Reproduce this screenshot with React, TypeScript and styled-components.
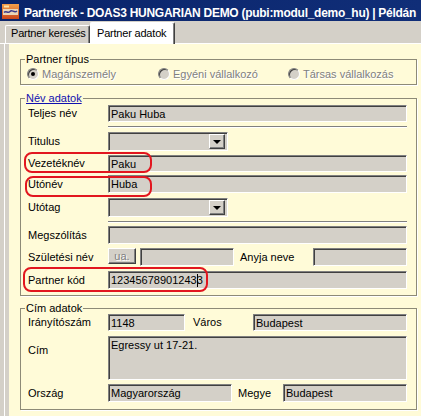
import React from "react";
import styled, { createGlobalStyle } from "styled-components";

const GlobalStyle = createGlobalStyle`
  html, body { margin: 0; padding: 0; background: #d4d0c8; }
  body {
    font-family: "Liberation Sans", Arial, sans-serif;
    font-size: 11px;
    color: #000;
  }
  * { box-sizing: border-box; }
`;

const Window = styled.div`
  width: 421px;
  height: 416px;
  overflow: hidden;
  display: flex;
  flex-direction: column;
  background: #d4d0c8;
`;

const TitleBar = styled.div`
  height: 21px;
  flex: none;
  display: flex;
  align-items: flex-start;
  gap: 5px;
  padding: 4px 0 0 2px;
  background: linear-gradient(90deg, #0a246a 0%, #102e78 100%);
  overflow: hidden;
`;

const Title = styled.div`
  margin-top: 2px;
  color: #fff;
  font-weight: bold;
  font-size: 12px;
  line-height: 14px;
  letter-spacing: -0.28px;
  white-space: nowrap;
`;

const TabStrip = styled.div`
  height: 23px;
  flex: none;
  display: flex;
  align-items: flex-end;
  padding-left: 5px;
  border-bottom: 1px solid #fff;
`;

const Tab = styled.div<{ $active?: boolean }>`
  width: 85px;
  height: ${(p) => (p.$active ? 22 : 18)}px;
  margin-bottom: ${(p) => (p.$active ? -1 : 0)}px;
  padding: ${(p) => (p.$active ? "3px 0 0 6px" : "0 0 0 5px")};
  line-height: 14px;
  letter-spacing: -0.2px;
  background: ${(p) => (p.$active ? "#fff" : "#d4d0c8")};
  border-top: 1px solid #fff;
  border-left: 1px solid #fff;
  border-right: 1px solid #404040;
  box-shadow: inset -1px 0 0 #808080;
  border-radius: 2px 2px 0 0;
  white-space: nowrap;
  overflow: hidden;
  position: relative;
  z-index: ${(p) => (p.$active ? 1 : 0)};
`;

const Page = styled.div`
  flex: 1;
  display: flex;
  margin-left: 4px;
  border-left: 1px solid #fff;
  padding-left: 4px;
`;

const Panel = styled.div`
  flex: 1;
  background: #fffbd8;
  padding: 9px 4px 0 11px;
`;

const Group = styled.fieldset<{ $mt?: number; $pb?: number }>`
  margin: ${(p) => p.$mt ?? 0}px 0 0 0;
  padding: 0 9px ${(p) => p.$pb ?? 4}px 7px;
  border: 1px solid #8d8a77;
  box-shadow: 1px 1px 0 #fff;
  min-inline-size: 0;
`;

const Legend = styled.legend<{ $link?: boolean; $lh?: number }>`
  padding: 0 1px;
  margin-left: -3px;
  line-height: ${(p) => p.$lh ?? 13}px;
  font-size: 11px;
  color: ${(p) => (p.$link ? "#1010b0" : "#000")};
  text-decoration: ${(p) => (p.$link ? "underline" : "none")};
  background: #fffbd8;
`;

const RadioRow = styled.div`
  display: grid;
  grid-template-columns: 131px 130px 1fr;
  align-items: center;
  height: 14px;
  margin: 1px 0 0 -1px;
`;

const RadioItem = styled.label`
  display: flex;
  align-items: center;
  gap: 3px;
  color: #808080;
  text-shadow: 1px 1px 0 #fff;
  white-space: nowrap;
`;

const RadioDot = styled.span<{ $checked?: boolean }>`
  width: 12px;
  height: 12px;
  border-radius: 50%;
  flex: none;
  background: #d4d0c8;
  border: 1px solid;
  border-color: #808080 #fff #fff #808080;
  box-shadow: inset 1px 1px 0 #404040;
  display: flex;
  align-items: center;
  justify-content: center;
  &::after {
    content: "";
    width: 4px;
    height: 4px;
    border-radius: 50%;
    background: ${(p) => (p.$checked ? "#000" : "transparent")};
  }
`;

const Row = styled.div<{ $mt?: number; $cols?: string; $align?: string }>`
  position: relative;
  display: grid;
  grid-template-columns: ${(p) => p.$cols ?? "80px 1fr"};
  align-items: ${(p) => p.$align ?? "center"};
  margin-top: ${(p) => p.$mt ?? 0}px;
`;

const Label = styled.span<{ $pl?: number; $pt?: number }>`
  padding-left: ${(p) => p.$pl ?? 0}px;
  padding-top: ${(p) => p.$pt ?? 0}px;
  white-space: nowrap;
  line-height: 13px;
`;

const TextBox = styled.div<{ $h?: number; $w?: number; $top?: boolean }>`
  height: ${(p) => p.$h ?? 18}px;
  width: ${(p) => (p.$w ? `${p.$w}px` : "auto")};
  background: #d4d0c8;
  border-top: 1px solid #808080;
  border-left: 1px solid #808080;
  border-bottom: 1px solid #fff;
  border-right: 1px solid #fff;
  box-shadow: inset 1px 1px 0 #404040, inset -1px -1px 0 #d4d0c8;
  padding: ${(p) => (p.$top ? "2px 2px 0 2px" : "1px 2px 0 2px")};
  display: flex;
  align-items: ${(p) => (p.$top ? "flex-start" : "center")};
  white-space: nowrap;
  overflow: hidden;
  line-height: 13px;
`;

const Combo = styled(TextBox)`
  justify-content: flex-end;
  padding: 0 2px 0 0;
`;

const DropButton = styled.span`
  width: 16px;
  height: 15px;
  background: #d4d0c8;
  border: 1px solid;
  border-color: #fff #404040 #404040 #fff;
  box-shadow: inset -1px -1px 0 #808080;
  display: flex;
  align-items: center;
  justify-content: center;
  &::after {
    content: "";
    border-left: 4px solid transparent;
    border-right: 4px solid transparent;
    border-top: 4px solid #000;
    margin-top: 1px;
  }
`;

const SmallButton = styled.span`
  width: 28px;
  height: 16px;
  align-self: start;
  background: #d4d0c8;
  border: 1px solid;
  border-color: #fff #404040 #404040 #fff;
  box-shadow: inset -1px -1px 0 #808080;
  color: #808080;
  text-shadow: 1px 1px 0 #fff;
  display: flex;
  align-items: center;
  justify-content: center;
  line-height: 12px;
`;

const Separator = styled.div<{ $mt?: number }>`
  height: 2px;
  margin: ${(p) => p.$mt ?? 4}px 0 0 80px;
  border-top: 1px solid #808080;
  border-bottom: 1px solid #fff;
`;

const Caret = styled.span`
  display: inline-block;
  width: 1px;
  height: 13px;
  background: #000;
  margin: 0 -1px 0 0;
  vertical-align: middle;
`;

const Annotation = styled.span<{ $l: number; $t: number; $w: number; $h: number }>`
  position: absolute;
  left: ${(p) => p.$l}px;
  top: ${(p) => p.$t}px;
  width: ${(p) => p.$w}px;
  height: ${(p) => p.$h}px;
  border: 2.5px solid #e2161f;
  border-radius: 8px;
  pointer-events: none;
`;

const AppIcon = () => (
  <svg width="17" height="15" viewBox="0 0 17 15" style={{ flex: "none" }}>
    <defs>
      <linearGradient id="ig" x1="0" y1="0" x2="0" y2="1">
        <stop offset="0" stopColor="#f4a04a" />
        <stop offset="1" stopColor="#c8461c" />
      </linearGradient>
    </defs>
    <rect x="0" y="0" width="17" height="15" fill="url(#ig)" />
    <rect x="1" y="5" width="15" height="6" fill="#e9d6b8" />
    <path d="M2 8.5 C4 6, 6 10, 8 7.5 S12 9.5, 15 7" stroke="#3a3a8a" strokeWidth="1.4" fill="none" />
    <rect x="2" y="1.5" width="5" height="2" fill="#fbe3a8" />
  </svg>
);

const App = () => (
  <>
    <GlobalStyle />
    <Window>
      <TitleBar>
        <AppIcon />
        <Title>Partnerek - DOAS3 HUNGARIAN DEMO (pubi:modul_demo_hu) | Példán</Title>
      </TitleBar>
      <TabStrip>
        <Tab>Partner keresés</Tab>
        <Tab $active>Partner adatok</Tab>
      </TabStrip>
      <Page>
        <Panel>
          <Group $pb={3}>
            <Legend>Partner típus</Legend>
            <RadioRow>
              <RadioItem>
                <RadioDot $checked />
                Magánszemély
              </RadioItem>
              <RadioItem>
                <RadioDot />
                Egyéni vállalkozó
              </RadioItem>
              <RadioItem>
                <RadioDot />
                Társas vállalkozás
              </RadioItem>
            </RadioRow>
          </Group>

          <Group $mt={7} $pb={6}>
            <Legend $link>Név adatok</Legend>
            <Row>
              <Label>Teljes név</Label>
              <TextBox $h={17}>Paku Huba</TextBox>
            </Row>
            <Separator $mt={4} />
            <Row $mt={4}>
              <Label>Titulus</Label>
              <Combo $h={19} $w={120}>
                <DropButton />
              </Combo>
            </Row>
            <Row $mt={4}>
              <Label>Vezetéknév</Label>
              <TextBox $h={17}>Paku</TextBox>
              <Annotation $l={-4} $t={-3} $w={128} $h={21} />
            </Row>
            <Row $mt={3}>
              <Label>Utónév</Label>
              <TextBox>Huba</TextBox>
              <Annotation $l={-3} $t={1} $w={127} $h={21} />
            </Row>
            <Row $mt={5}>
              <Label>Utótag</Label>
              <Combo $h={19} $w={120}>
                <DropButton />
              </Combo>
            </Row>
            <Separator $mt={4} />
            <Row $mt={3}>
              <Label>Megszólítás</Label>
              <TextBox />
            </Row>
            <Row $mt={4} $cols="80px 32px 94px 79px 1fr">
              <Label>Születési név</Label>
              <SmallButton>ua.</SmallButton>
              <TextBox />
              <Label $pl={6}>Anyja neve</Label>
              <TextBox />
            </Row>
            <Row $mt={5}>
              <Label>Partner kód</Label>
              <TextBox>
                12345678901243
                <Caret />3
              </TextBox>
              <Annotation $l={-5} $t={-4} $w={185} $h={25} />
            </Row>
          </Group>

          <Group $mt={6} $pb={7}>
            <Legend $lh={12}>Cím adatok</Legend>
            <Row $cols="80px 77px 68px 1fr">
              <Label>Irányítószám</Label>
              <TextBox $h={17}>1148</TextBox>
              <Label $pl={8}>Város</Label>
              <TextBox $h={17}>Budapest</TextBox>
            </Row>
            <Row $mt={5} $align="start">
              <Label $pt={8}>Cím</Label>
              <TextBox $h={44} $top>
                Egressy ut 17-21.
              </TextBox>
            </Row>
            <Row $mt={4} $cols="80px 124px 51px 1fr">
              <Label>Ország</Label>
              <TextBox>Magyarország</TextBox>
              <Label $pl={6}>Megye</Label>
              <TextBox>Budapest</TextBox>
            </Row>
          </Group>
        </Panel>
      </Page>
    </Window>
  </>
);

export default App;
